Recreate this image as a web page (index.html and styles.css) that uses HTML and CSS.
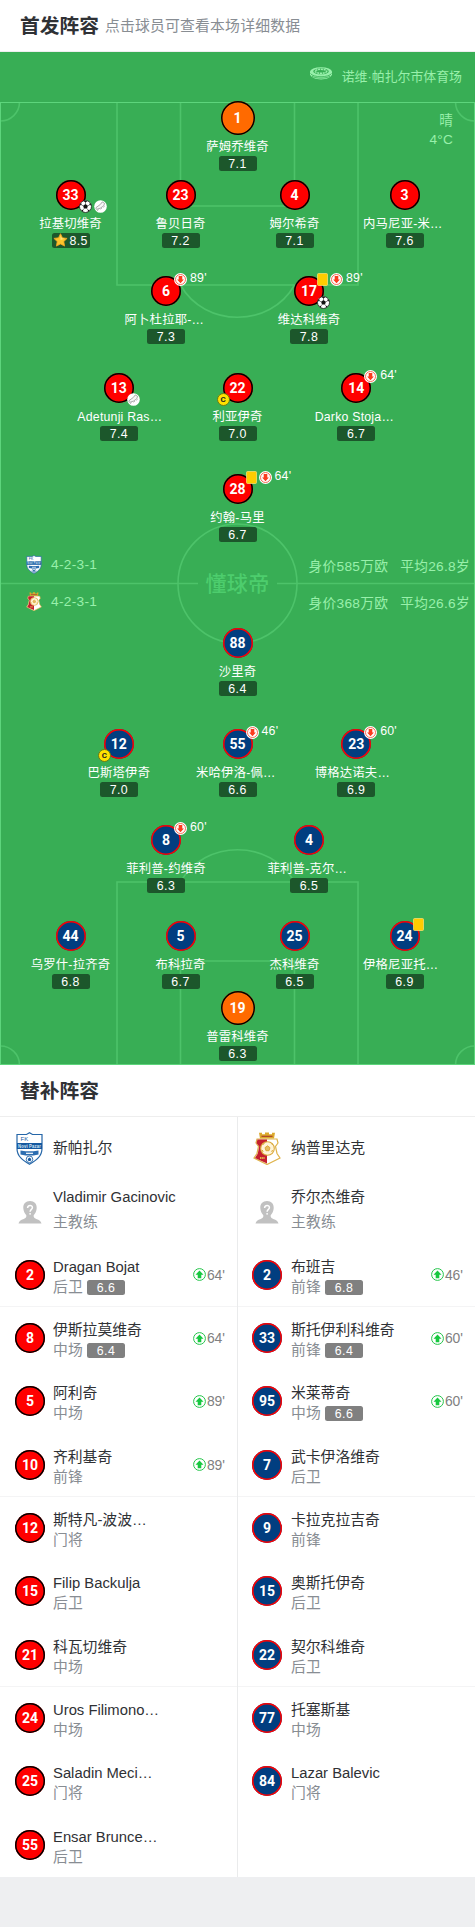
FILE: index.html
```html
<!DOCTYPE html>
<html lang="zh-CN">
<head>
	<meta charset="utf-8">
	<meta name="viewport" content="width=device-width, initial-scale=1">
	<title>首发阵容</title>
	<link rel="stylesheet" href="styles.css">
</head>
<body>
	<!-- icons -->
	<svg class="sprite" width="0" height="0">
		<symbol id="i-out" viewBox="0 0 13 13">
			<circle cx="6.5" cy="6.5" r="6.5" fill="#fff"/>
			<circle cx="6.5" cy="6.5" r="5" fill="none" stroke="#f5492c" stroke-width=".8"/>
			<path d="M4.700 3h3.600v3.400h1.600L6.500 10.200 3.100 6.400h1.600z" fill="#fa3c1e"/>
		</symbol>
		<symbol id="i-in" viewBox="0 0 13 13">
			<circle cx="6.5" cy="6.5" r="5.9" fill="#fff" stroke="#24c44a" stroke-width="1"/>
			<path d="M4.700 10.200h3.600V6.800h2.200L6.5 2.600 2.500 6.800h2.200z" fill="#17c83f"/>
		</symbol>
		<symbol id="i-card" viewBox="0 0 11 13">
			<rect x=".5" y=".5" width="10" height="12" rx="1" fill="#fc0" stroke="#ffe27a" stroke-width=".7"/>
		</symbol>
		<symbol id="i-ball" viewBox="0 0 13 13">
			<circle cx="6.5" cy="6.5" r="6" fill="#fff" stroke="#222" stroke-width=".8"/>
			<path d="M6.5 4.1l2.4 1.7-.9 2.8H5L4.1 5.8zM4.6.9h3.8L6.5 2.4zM.6 5.2L2.2 3l.5 2zM12.4 5.2L10.8 3l-.5 2zM2 9.8l2 .1.4 2zM11 9.8l-2 .1-.4 2z" fill="#111"/>
			<path d="M6.5 2v2M2.5 5.1l1.7.7M10.5 5.1l-1.7.7M4 10l1-1.5M9 10L8 8.500" stroke="#333" stroke-width=".6"/>
		</symbol>
		<symbol id="i-boot" viewBox="0 0 13 13">
			<circle cx="6.5" cy="6.500" r="6.300" fill="#fff"/>
			<path d="M8.300 1.900L6.400 4.400 2 7.600c-.5.900.1 1.800 1.100 1.600l3.200-1 3.600-2.500.6-2.400zM3 10.500l1.500-.8M6.500 9.200l1.300-.9M9.500 7.300l1-.8" fill="#f6f6f6" stroke="#888" stroke-width=".7"/>
		</symbol>
		<symbol id="i-star" viewBox="0 0 15 14">
			<path d="M7.500.7l2 4.100 4.600.6-3.300 3.200.8 4.500-4.100-2.100-4.100 2.100.8-4.500L.9 5.400l4.600-.6z" fill="#fdc52c" stroke="#f5a31f" stroke-width=".8" stroke-linejoin="round"/>
			<path d="M7.500 2.200L8.800 5.300l3 .5L7.500 7z" fill="#ffe480"/>
		</symbol>
		<symbol id="i-coach" viewBox="0 0 24 23">
			<path d="M12 0c4.300 0 7 3 6.700 7.300-.2 3-1.400 5.200-3 6.900-.3 2 .4 2.900 2.600 3.700 3 1 4.700 2 5.200 4.700H.5c.5-2.700 2.200-3.700 5.200-4.700 2.200-.8 2.900-1.700 2.600-3.700-1.600-1.700-2.800-3.900-3-6.900C5 3 7.700 0 12 0z" fill="#c1c1c1"/>
			<path d="M9.600 6.900c0-3.300 5-3.100 4.800-.2-.1 1.700-2.300 1.700-2.300 4" fill="none" stroke="#fff" stroke-width="1.500"/>
			<circle cx="12.100" cy="12.800" r=".9" fill="#fff"/>
		</symbol>
		<symbol id="i-stadium" viewBox="0 0 22 13">
			<path d="M0 4.500v2.800C1 10.500 5.500 12.500 11 12.500s10-2 11-5.200V4.500z" fill="#98f0ab"/>
			<ellipse cx="11" cy="4.900" rx="11" ry="4.700" fill="#98f0ab"/>
			<ellipse cx="11" cy="4.300" rx="7.800" ry="3" fill="#38ae55"/>
			<ellipse cx="11" cy="4.300" rx="5.800" ry="2" fill="none" stroke="#98f0ab" stroke-width="1.500" stroke-dasharray="2 .7"/>
			<path d="M.5 6.500C3 10.800 19 10.800 21.500 6.500M2 9.200c4 2.600 14 2.600 18 0" fill="none" stroke="#38ae55" stroke-width=".8"/>
		</symbol>
		<symbol id="i-novi" viewBox="0 0 27 33">
			<path d="M1 2.500h9.500L13.500.8l3 1.700H26v14c0 8-6 12-12.500 15.700C7 28.500 1 24.500 1 16.500z" fill="#fff" stroke="#2566a8" stroke-width="1.200"/>
			<path d="M1 11h25v6H1z" fill="#1559a0"/>
			<path d="M4.500 18.500l5 .8h8l5-.8v4l-5 1h-8l-5-1z" fill="#2c6db0"/>
			<path d="M10 21.300h7" stroke="#fff" stroke-width="1.200"/>
			<circle cx="13.500" cy="27.300" r="3.300" fill="#fff" stroke="#2566a8" stroke-width=".9"/>
			<path d="M13.500 25.600l1.800 1.300-.7 2h-2.200l-.7-2z" fill="#1559a0"/>
			<text x="4.500" y="9" font-size="6" fill="#1559a0">FK</text>
			<text x="2" y="15.900" font-size="4.800" font-weight="bold" fill="#d7e6f5" textLength="23" lengthAdjust="spacingAndGlyphs">Novi Pazar</text>
		</symbol>
		<symbol id="i-napredak" viewBox="0 0 28 33">
			<path d="M6 .8h3v1.500h3V.5h4v1.800h3V.8h3l-1 5.700H7z" fill="#dca92c"/>
			<path d="M8.500 4.300h11" stroke="#a7382d" stroke-width="1.100"/>
			<path d="M4 7h20l1 4-2.500 3.500 1.500 7L27 26 14 32.500 1 26l3-4.500 1.500-7L3 11z" fill="#fff" stroke="#dfb34a" stroke-width="1.200"/>
			<path d="M4.500 7.500H14v24L2 26l2.700-4.300 1.500-7.300L3.500 11z" fill="#c41f2e"/>
			<circle cx="14.500" cy="16.500" r="6.800" fill="#fff4d8" stroke="#dba93a" stroke-width="1.100"/>
			<path d="M14.500 13.800l2.500 1.900-1 3h-3l-1-3zM10 12.500l1.500-1M18.500 11.500l1.200 1.500M9.300 18l.8 2M19.500 18l-.8 2" fill="#e3bd62" stroke="#dba93a" stroke-width="1"/>
			<path d="M7 26h5" stroke="#e5b34b" stroke-width="2" stroke-dasharray="1.200 .5"/>
		</symbol>
	</svg>

	<div class="head head-main">
		<h2>首发阵容</h2>
		<span>点击球员可查看本场详细数据</span>
	</div>

	<div class="pitch">
		<svg class="pitch-lines" viewBox="0 0 475 963" width="475" height="963">
			<g fill="none" stroke="#4dc36a" stroke-width="1.600">
				<path d="M117 0v183h241V0M180.500 0v104h114V0"/>
				<path d="M180.500 183c24 43 90 43 114 0"/>
				<path d="M117 963V780h241v183M180.500 963V859h114v104"/>
				<path d="M180.500 780c24-43 90-43 114 0"/>
				<circle cx="237.500" cy="481.500" r="59.500"/>
				<path d="M0 481.500h198M277 481.500h198"/>
				<path d="M19.500 0A19 19 0 0 1 0 19M455.500 0A19 19 0 0 0 475 19M19.500 963A19 19 0 0 0 0 944M455.500 963A19 19 0 0 1 475 944"/>
			</g>
			<rect x=".5" y=".5" width="474" height="962" fill="none" stroke="#5dd57c"/>
		</svg>

		<div class="stadium">
			<svg width="22" height="13"><use href="#i-stadium"/></svg>
			<span>诺维·帕扎尔市体育场</span>
		</div>
		<div class="weather">晴<br>4°C</div>

		<div class="half half-home">
			<div class="row">
				<div class="player keeper"><div class="shirt">1</div><div class="name">萨姆乔维奇</div><div class="rate">7.1</div></div>
			</div>
			<div class="row row-4">
				<div class="player">
					<div class="shirt">33
						<div class="goals"><svg width="13" height="13"><use href="#i-ball"/></svg><svg width="13" height="13"><use href="#i-boot"/></svg></div>
					</div>
					<div class="name">拉基切维奇</div>
					<div class="rate rate-best"><svg width="15" height="14"><use href="#i-star"/></svg>8.5</div>
				</div>
				<div class="player"><div class="shirt">23</div><div class="name">鲁贝日奇</div><div class="rate">7.2</div></div>
				<div class="player"><div class="shirt">4</div><div class="name">姆尔希奇</div><div class="rate">7.1</div></div>
				<div class="player"><div class="shirt">3</div><div class="name cut">内马尼亚-米…</div><div class="rate">7.6</div></div>
			</div>
			<div class="row row-2">
				<div class="player">
					<div class="shirt">6
						<div class="events"><svg width="13" height="13"><use href="#i-out"/></svg><span>89'</span></div>
					</div>
					<div class="name cut">阿卜杜拉耶-…</div>
					<div class="rate">7.3</div>
				</div>
				<div class="player">
					<div class="shirt">17
						<div class="events"><svg width="11" height="13"><use href="#i-card"/></svg><svg width="13" height="13"><use href="#i-out"/></svg><span>89'</span></div>
						<div class="goals"><svg width="13" height="13"><use href="#i-ball"/></svg></div>
					</div>
					<div class="name">维达科维奇</div>
					<div class="rate">7.8</div>
				</div>
			</div>
			<div class="row row-3">
				<div class="player">
					<div class="shirt">13
						<div class="goals"><svg width="13" height="13"><use href="#i-boot"/></svg></div>
					</div>
					<div class="name cut">Adetunji Ras…</div>
					<div class="rate">7.4</div>
				</div>
				<div class="player">
					<div class="shirt">22<b class="captain">C</b></div>
					<div class="name">利亚伊奇</div>
					<div class="rate">7.0</div>
				</div>
				<div class="player">
					<div class="shirt">14
						<div class="events"><svg width="13" height="13"><use href="#i-out"/></svg><span>64'</span></div>
					</div>
					<div class="name cut">Darko Stoja…</div>
					<div class="rate">6.7</div>
				</div>
			</div>
			<div class="row">
				<div class="player">
					<div class="shirt">28
						<div class="events"><svg width="11" height="13"><use href="#i-card"/></svg><svg width="13" height="13"><use href="#i-out"/></svg><span>64'</span></div>
					</div>
					<div class="name">约翰-马里</div>
					<div class="rate">6.7</div>
				</div>
			</div>
		</div>

		<div class="middle">
			<div class="formation">
				<div><svg width="16" height="19"><use href="#i-novi"/></svg>4-2-3-1</div>
				<div><svg width="16" height="19"><use href="#i-napredak"/></svg>4-2-3-1</div>
			</div>
			<div class="brand">懂球帝</div>
			<div class="worth">
				<div><span>身价585万欧</span><span>平均26.8岁</span></div>
				<div><span>身价368万欧</span><span>平均26.6岁</span></div>
			</div>
		</div>

		<div class="half half-away">
			<div class="row">
				<div class="player"><div class="shirt">88</div><div class="name">沙里奇</div><div class="rate">6.4</div></div>
			</div>
			<div class="row row-3">
				<div class="player">
					<div class="shirt">12<b class="captain">C</b></div>
					<div class="name">巴斯塔伊奇</div>
					<div class="rate">7.0</div>
				</div>
				<div class="player">
					<div class="shirt">55
						<div class="events"><svg width="13" height="13"><use href="#i-out"/></svg><span>46'</span></div>
					</div>
					<div class="name cut">米哈伊洛-佩…</div>
					<div class="rate">6.6</div>
				</div>
				<div class="player">
					<div class="shirt">23
						<div class="events"><svg width="13" height="13"><use href="#i-out"/></svg><span>60'</span></div>
					</div>
					<div class="name cut">博格达诺夫…</div>
					<div class="rate">6.9</div>
				</div>
			</div>
			<div class="row row-2">
				<div class="player">
					<div class="shirt">8
						<div class="events"><svg width="13" height="13"><use href="#i-out"/></svg><span>60'</span></div>
					</div>
					<div class="name">菲利普-约维奇</div>
					<div class="rate">6.3</div>
				</div>
				<div class="player"><div class="shirt">4</div><div class="name cut">菲利普-克尔…</div><div class="rate">6.5</div></div>
			</div>
			<div class="row row-4">
				<div class="player"><div class="shirt">44</div><div class="name">乌罗什-拉齐奇</div><div class="rate">6.8</div></div>
				<div class="player"><div class="shirt">5</div><div class="name">布科拉奇</div><div class="rate">6.7</div></div>
				<div class="player"><div class="shirt">25</div><div class="name">杰科维奇</div><div class="rate">6.5</div></div>
				<div class="player">
					<div class="shirt">24
						<div class="events"><svg width="11" height="13"><use href="#i-card"/></svg></div>
					</div>
					<div class="name cut">伊格尼亚托…</div>
					<div class="rate">6.9</div>
				</div>
			</div>
			<div class="row">
				<div class="player keeper"><div class="shirt">19</div><div class="name">普雷科维奇</div><div class="rate">6.3</div></div>
			</div>
		</div>
	</div>

	<div class="head head-subs">
		<h2>替补阵容</h2>
	</div>

	<div class="subs">
		<div class="team team-home">
			<div class="item"><svg class="logo" width="27" height="33"><use href="#i-novi"/></svg><p>新帕扎尔</p></div>
			<div class="item coach"><svg class="logo" width="24" height="23"><use href="#i-coach"/></svg><div class="text"><p>Vladimir Gacinovic</p><small>主教练</small></div></div>
			<div class="item"><div class="shirt">2</div><div class="text"><p>Dragan Bojat</p><small>后卫<i class="rate">6.6</i></small></div><div class="time"><svg width="13" height="13"><use href="#i-in"/></svg>64'</div></div>
			<div class="item"><div class="shirt">8</div><div class="text"><p>伊斯拉莫维奇</p><small>中场<i class="rate">6.4</i></small></div><div class="time"><svg width="13" height="13"><use href="#i-in"/></svg>64'</div></div>
			<div class="item"><div class="shirt">5</div><div class="text"><p>阿利奇</p><small>中场</small></div><div class="time"><svg width="13" height="13"><use href="#i-in"/></svg>89'</div></div>
			<div class="item"><div class="shirt">10</div><div class="text"><p>齐利基奇</p><small>前锋</small></div><div class="time"><svg width="13" height="13"><use href="#i-in"/></svg>89'</div></div>
			<div class="item"><div class="shirt">12</div><div class="text"><p>斯特凡-波波…</p><small>门将</small></div></div>
			<div class="item"><div class="shirt">15</div><div class="text"><p>Filip Backulja</p><small>后卫</small></div></div>
			<div class="item"><div class="shirt">21</div><div class="text"><p>科瓦切维奇</p><small>中场</small></div></div>
			<div class="item"><div class="shirt">24</div><div class="text"><p>Uros Filimono…</p><small>中场</small></div></div>
			<div class="item"><div class="shirt">25</div><div class="text"><p>Saladin Meci…</p><small>门将</small></div></div>
			<div class="item"><div class="shirt">55</div><div class="text"><p>Ensar Brunce…</p><small>后卫</small></div></div>
		</div>
		<div class="team team-away">
			<div class="item"><svg class="logo" width="28" height="33"><use href="#i-napredak"/></svg><p>纳普里达克</p></div>
			<div class="item coach"><svg class="logo" width="24" height="23"><use href="#i-coach"/></svg><div class="text"><p>乔尔杰维奇</p><small>主教练</small></div></div>
			<div class="item"><div class="shirt">2</div><div class="text"><p>布班吉</p><small>前锋<i class="rate">6.8</i></small></div><div class="time"><svg width="13" height="13"><use href="#i-in"/></svg>46'</div></div>
			<div class="item"><div class="shirt">33</div><div class="text"><p>斯托伊利科维奇</p><small>前锋<i class="rate">6.4</i></small></div><div class="time"><svg width="13" height="13"><use href="#i-in"/></svg>60'</div></div>
			<div class="item"><div class="shirt">95</div><div class="text"><p>米莱蒂奇</p><small>中场<i class="rate">6.6</i></small></div><div class="time"><svg width="13" height="13"><use href="#i-in"/></svg>60'</div></div>
			<div class="item"><div class="shirt">7</div><div class="text"><p>武卡伊洛维奇</p><small>后卫</small></div></div>
			<div class="item"><div class="shirt">9</div><div class="text"><p>卡拉克拉吉奇</p><small>前锋</small></div></div>
			<div class="item"><div class="shirt">15</div><div class="text"><p>奥斯托伊奇</p><small>后卫</small></div></div>
			<div class="item"><div class="shirt">22</div><div class="text"><p>契尔科维奇</p><small>后卫</small></div></div>
			<div class="item"><div class="shirt">77</div><div class="text"><p>托塞斯基</p><small>中场</small></div></div>
			<div class="item"><div class="shirt">84</div><div class="text"><p>Lazar Balevic</p><small>门将</small></div></div>
		</div>
	</div>
</body>
</html>
```

FILE: styles.css
```css
* {
	box-sizing: border-box;
}

body {
	margin: 0;
	min-height: 1927px;
	background: #eeeff1;
	color: #2f3135;
	font-family: "Liberation Sans", "Noto Sans CJK SC", sans-serif;
	font-size: 14.82px;
	letter-spacing: .2px;
}

h2, p {
	margin: 0;
}

svg {
	display: block;
	flex: none;
}

.sprite {
	display: none;
}

/* section titles */
.head {
	display: flex;
	align-items: center;
	height: 52px;
	padding: 0 0 2px 20px;
	background: #fff;
	border-bottom: 1px solid #eee;
}

.head h2 {
	font-size: 19.76px;
	letter-spacing: 0;
}

.head span {
	margin-left: 6px;
	color: #888d93;
}

/* pitch */
.pitch {
	position: relative;
	height: 1013px;
	background: #38ae55;
	color: #fff;
}

.pitch-lines {
	position: absolute;
	left: 0;
	top: 50px;
}

.stadium {
	position: relative;
	display: flex;
	justify-content: flex-end;
	height: 49px;
	padding: 15px 13px 0 0;
	color: #98f0ab;
	font-size: 12.900px;
	letter-spacing: 0;
	line-height: 19px;
}

.stadium span {
	margin-left: 10px;
}

.weather {
	position: absolute;
	top: 59px;
	right: 22px;
	color: #98f0ab;
	font-size: 13.6px;
	line-height: 19px;
	text-align: right;
}

.half {
	position: relative;
	display: grid;
}

.half-home {
	grid-template-rows: 79px 96px 97px 101px 69px;
}

.half-away {
	grid-template-rows: 101px 96px 96px 70px 73px;
}

.row {
	display: flex;
	justify-content: center;
}

.player {
	display: flex;
	flex-direction: column;
	align-items: center;
	width: 110px;
}

.row-2 .player {
	width: 143px;
}

.row-3 .player {
	width: 118.7px;
}

.row-4 .player:nth-child(2) {
	margin-right: 4px;
}

.shirt {
	position: relative;
	flex: none;
	width: 30px;
	height: 30px;
	border-radius: 50%;
	background: #f00;
	box-shadow: inset 0 0 0 1.500px #000;
	color: #fff;
	font: bold 14px/30px Roboto, sans-serif;
	letter-spacing: 0;
	text-align: center;
}

.half-away .shirt,
.team-away .shirt {
	background: #013e80;
	box-shadow: inset 0 0 0 1.500px #f00;
}

.half .keeper .shirt {
	width: 34px;
	height: 34px;
	background: #ff6a00;
	box-shadow: inset 0 0 0 1.500px #000;
	line-height: 34px;
}

.name {
	margin-top: 6px;
	font-size: 12.35px;
	line-height: 17px;
	white-space: nowrap;
}

.keeper .name {
	margin-top: 4px;
}

.cut {
	width: 83px;
}

.rate {
	width: 38px;
	height: 15px;
	border-radius: 2.500px;
	background: #1c572b;
	color: #fff;
	font-size: 12.35px;
	font-style: normal;
	line-height: 16px;
	letter-spacing: .4px;
	text-align: center;
}

.rate-best {
	display: flex;
	padding-left: 1px;
	gap: 2px;
}

/* badges around the shirt */
.events,
.goals {
	position: absolute;
	left: 23px;
	display: flex;
	align-items: center;
	gap: 2px;
	font: 12.35px/13px "Liberation Sans", sans-serif;
}

.events {
	top: -3px;
}

.events span {
	position: relative;
	top: -1px;
	margin-left: 1px;
	letter-spacing: .2px;
}

.goals {
	top: 20px;
}

.captain {
	position: absolute;
	left: -6px;
	top: 20px;
	width: 13px;
	height: 13px;
	border: 1px solid #6b7a12;
	border-radius: 50%;
	background: #ffe100;
	color: #222;
	font: bold 8px/11px Roboto, sans-serif;
}

/* formation, brand and team value */
.middle {
	position: relative;
	display: flex;
	justify-content: space-between;
	height: 85px;
	padding: 3px 5px 0 26px;
	color: #98f0ab;
	font-size: 13.700px;
	letter-spacing: .3px;
}

.formation div,
.worth div {
	display: flex;
	align-items: center;
	height: 37px;
}

.formation {
	width: 160px;
}

.formation svg {
	margin-right: 9px;
}

.brand {
	padding-top: 26px;
	color: #4dcd6d;
	font-size: 21px;
	font-weight: 500;
	line-height: 24px;
}

.worth {
	display: flex;
	flex-direction: column;
	align-items: flex-end;
	width: 181px;
}

.worth span + span {
	margin-left: 12px;
}

/* substitutes */
.subs {
	display: flex;
	background: #fff;
}

.team {
	width: 237px;
}

.team-home {
	width: 238px;
	border-right: 1px solid #eaebec;
}

.item {
	display: flex;
	align-items: center;
	height: 63.330px;
	padding: 0 12px 0 15px;
	border-bottom: 1px solid transparent;
}

.team-away .item {
	padding-left: 14px;
}

.item:nth-child(3n):not(:last-child) {
	border-bottom-color: #f4f4f5;
}

.item .logo {
	margin: 0 10px 0 1px;
}

.item p {
	letter-spacing: 0;
	line-height: 20px;
}

.item .text {
	margin: 5px 0 0 8px;
}

.team-away .text {
	margin-left: 9px;
}

.item small {
	display: flex;
	align-items: center;
	color: #888d93;
	font-size: 14.82px;
	line-height: 21px;
}

.item .rate {
	margin-left: 4px;
	background: #808080;
}

.coach .logo {
	margin: 2px 0 0 3px;
}

.item.coach .text {
	margin: -2px 0 0 11px;
}

.team-away .item.coach .text {
	margin-left: 12px;
}

.coach .text small {
	margin-top: 5px;
}

.time {
	display: flex;
	align-items: center;
	margin-left: auto;
	gap: 1px;
	color: #808080;
	font-size: 13.900px;
	letter-spacing: 0;
}
```
